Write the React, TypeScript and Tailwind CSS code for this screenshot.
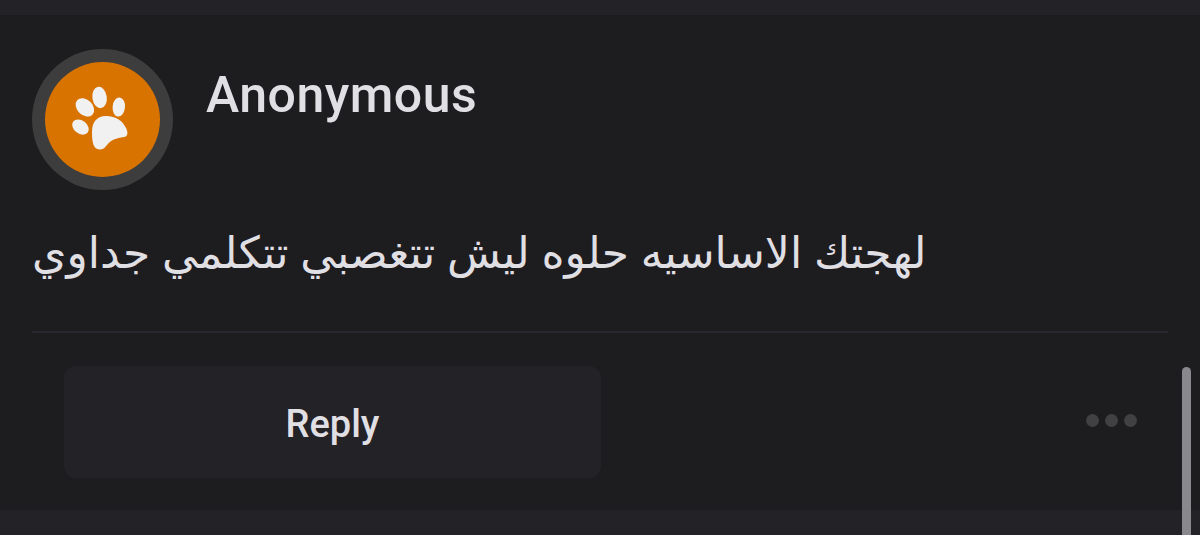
import React from 'react';

const PawIcon: React.FC = () => (
  <svg viewBox="0 0 80 85" className="w-20 h-[85px] shrink-0" fill="#f2f1f2">
    <ellipse cx="39.6" cy="22.4" rx="7.2" ry="10.8" transform="rotate(-8 39.6 22.4)" />
    <ellipse cx="24.9" cy="32.4" rx="7.7" ry="10.5" transform="rotate(-46 24.9 32.4)" />
    <ellipse cx="58.8" cy="32" rx="6.2" ry="9.6" transform="rotate(5 58.8 32)" />
    <ellipse cx="20.5" cy="52.1" rx="6.6" ry="9.1" transform="rotate(-53 20.5 52.1)" />
    <path d="M32 57C32 47 37 41 46 41C56 41 63 46 66.5 54C68 58 68 61.5 64 62C56 63 51 65 47 70C44.5 73 43 74.5 39.5 74.5C33 74.5 32 66 32 57Z" />
  </svg>
);

const Avatar: React.FC = () => (
  <div className="w-[141px] h-[141px] shrink-0 rounded-full bg-[#3d3d3e] flex items-center justify-center">
    <div className="w-[115px] h-[115px] rounded-full bg-[#d87300] flex items-center justify-center pr-1.5 pb-1">
      <PawIcon />
    </div>
  </div>
);

const MoreButton: React.FC = () => (
  <button className="flex items-center gap-1.5 pb-1" aria-label="More">
    <span className="w-[13px] h-[13px] rounded-full bg-[#414042]" />
    <span className="w-[13px] h-[13px] rounded-full bg-[#414042]" />
    <span className="w-[13px] h-[13px] rounded-full bg-[#414042]" />
  </button>
);

const App: React.FC = () => {
  return (
    <div className="relative w-[1200px] h-[535px] overflow-hidden bg-[#232227] pt-[15px] pb-[25px] font-['Roboto','DejaVu_Sans',sans-serif] text-[#e0dfe3]">
      <article className="h-[495px] bg-[#1d1d1f] px-8 pt-[33.5px]">
        <header className="flex items-start gap-[33px]">
          <Avatar />
          <h1 className="pt-4 text-[50px] leading-[60px] font-medium tracking-[0.5px]">Anonymous</h1>
        </header>

        <div className="h-[141.5px] pt-[31px] flex justify-start">
          <p
            dir="rtl"
            className="whitespace-nowrap font-['DejaVu_Sans',sans-serif] text-[44px] leading-[64px] [word-spacing:-2.2px]"
          >
            لهجتك الاساسيه حلوه ليش تتغصبي تتكلمي جداوي
          </p>
        </div>

        <div className="h-0.5 bg-[#2a2630]" />

        <footer className="flex items-center justify-between pt-[33px] pl-8 pr-[31px]">
          <button className="w-[537px] h-28 pt-1 rounded-xl bg-[#232227] text-[38px] font-medium">
            Reply
          </button>
          <MoreButton />
        </footer>
      </article>

      <div className="absolute right-[9px] top-[367px] w-[9px] h-[180px] rounded-full bg-[#89888c]" />
    </div>
  );
};

export default App;
